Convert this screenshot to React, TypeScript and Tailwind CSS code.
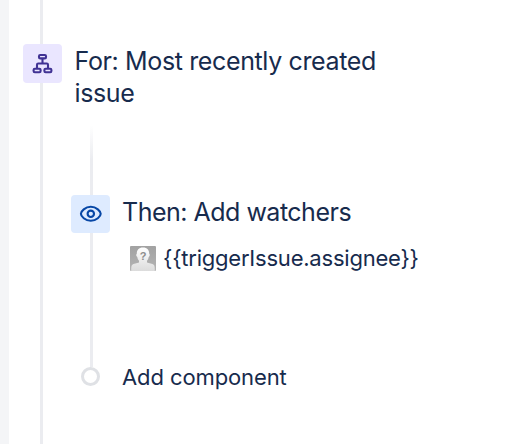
function HierarchyIcon() {
  return (
    <svg width="21" height="21" viewBox="0 0 21 21" fill="none" stroke="#403294" strokeWidth="2.1">
      <rect x="7" y="2" width="7" height="3.4" rx="1.2" />
      <rect x="1.6" y="15.8" width="7" height="3.4" rx="1.2" />
      <rect x="12.4" y="15.8" width="7" height="3.4" rx="1.2" />
      <path d="M10.5 5.5v5M5 15.5v-3.8a1.2 1.2 0 0 1 1.2-1.2h8.6a1.2 1.2 0 0 1 1.2 1.2v3.8" />
    </svg>
  );
}

function WatchIcon() {
  return (
    <svg width="23" height="18" viewBox="0 0 23 18" fill="none" stroke="#0747a6" strokeWidth="2.1">
      <path d="M1.9 8.8c0-2.6 4.3-7 9.9-7s9.9 4.4 9.9 7-4.3 7-9.9 7-9.900-4.400-9.900-7Z" />
      <circle cx="11.8" cy="8.8" r="3.2" />
    </svg>
  );
}

function UnknownAvatar() {
  return (
    <svg width="26" height="25" viewBox="0 0 26 25">
      <defs>
        <linearGradient id="avatar-bg" x1="0" y1="0" x2="0" y2="1">
          <stop offset="0" stopColor="#a2a2a2" />
          <stop offset="1" stopColor="#b4b4b4" />
        </linearGradient>
        <linearGradient id="avatar-body" x1="0" y1="0" x2="0" y2="1">
          <stop offset="0" stopColor="#ffffff" />
          <stop offset="1" stopColor="#dcdcdc" />
        </linearGradient>
      </defs>
      <rect width="26" height="25" rx="1" fill="url(#avatar-bg)" />
      <path
        d="M13 1.5c4.2 0 6.3 2.6 6.2 6.3 1 .5.7 2.7-.5 3.2-.3 1.7-.9 2.9-1.7 3.8v1.7c1.8 1 5.5.8 7 2.5.8.9.8 3.5.8 6H1.2c0-2.5 0-5.1.8-6 1.5-1.7 5.2-1.5 7-2.5v-1.7c-.8-.9-1.4-2.1-1.7-3.8-1.2-.5-1.500-2.700-.5-3.200C6.700 4.100 8.800 1.500 13 1.500Z"
        fill="url(#avatar-body)"
      />
      <text
        x="13"
        y="13.5"
        textAnchor="middle"
        fontFamily="Liberation Sans, sans-serif"
        fontWeight="700"
        fontSize="11"
        fill="#8c8c8c"
      >
        ?
      </text>
    </svg>
  );
}

export default function App() {
  return (
    <div className="flex h-[444px] w-[506px] overflow-hidden bg-white font-['Inter',sans-serif] text-[#172b4d]">
      <div className="w-[9px] shrink-0 bg-[#f4f5f7]" />

      <div className="ml-[14px] flex w-[39px] shrink-0 flex-col items-center">
        <div className="mr-[2px] h-[44px] w-[3px] bg-[#ebecf0]" />
        <div className="flex h-[39px] w-[39px] shrink-0 items-center justify-center rounded bg-[#eae6ff]">
          <HierarchyIcon />
        </div>
        <div className="mr-[2px] w-[3px] flex-1 bg-[#ebecf0]" />
      </div>

      <div className="ml-[9px] flex-1 pt-[45px]">
        <h2 className="w-[340px] pl-[3.5px] text-[25px] leading-8 tracking-[-0.37px]">
          For: Most recently created issue
        </h2>

        <div className="mt-[16px] flex">
          <div className="flex w-[39px] shrink-0 flex-col items-center">
            <div className="ml-[2px] h-[70px] w-[3px] bg-linear-to-b from-white to-[#ebecf0] to-50%" />
            <div className="flex h-[38px] w-[39px] shrink-0 items-center justify-center rounded bg-[#deebff]">
              <WatchIcon />
            </div>
            <div className="ml-[2px] h-[134px] w-[3px] bg-[#ebecf0]" />
            <div className="h-[19px] w-[19px] rounded-full border-3 border-[#dfe1e5] bg-white" />
          </div>

          <div className="ml-[12px] pt-[71px]">
            <h3 className="text-[25px] leading-8 tracking-[-0.5px]">Then: Add watchers</h3>
            <div className="mt-[16px] flex items-center pl-[8px]">
              <UnknownAvatar />
              <span className="ml-[7px] text-[22px] leading-7 tracking-[-0.22px]">
                {'{{triggerIssue.assignee}}'}
              </span>
            </div>
            <button className="mt-[91px] block text-[22px] leading-7 tracking-[-0.1px]">
              Add component
            </button>
          </div>
        </div>
      </div>
    </div>
  );
}
